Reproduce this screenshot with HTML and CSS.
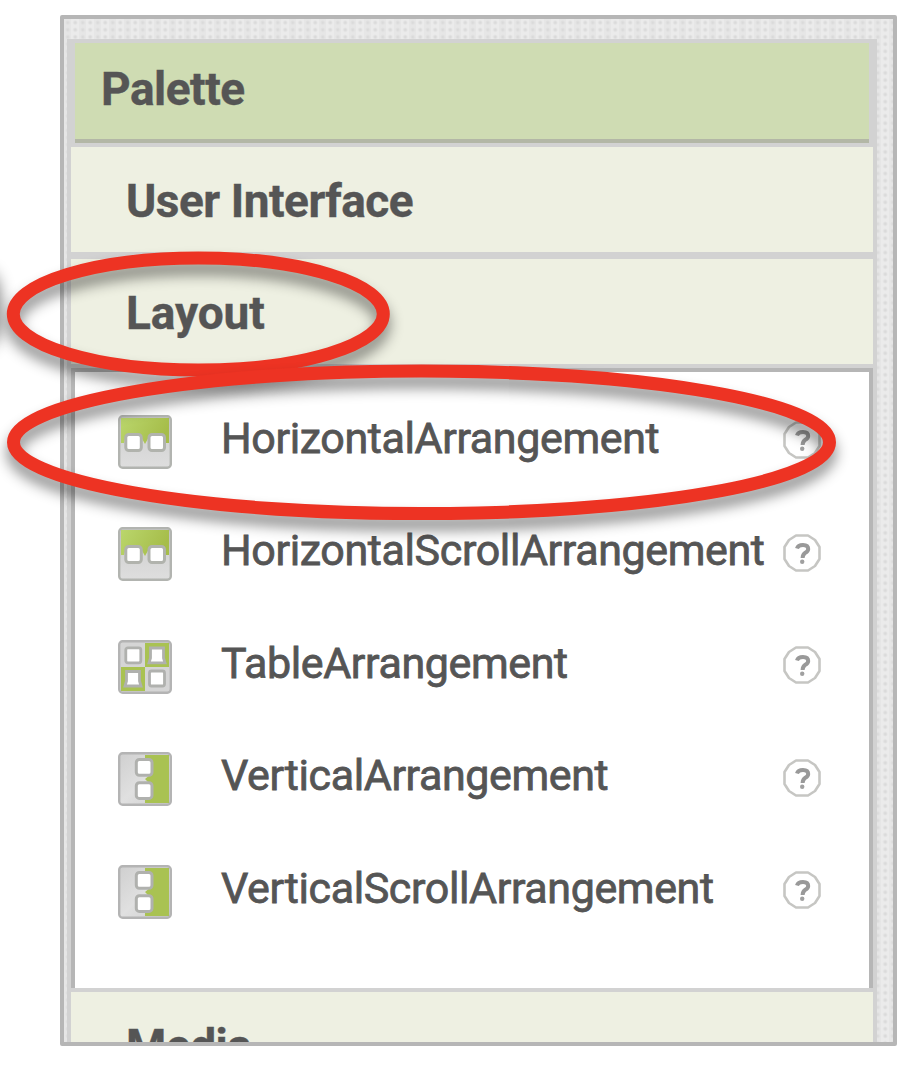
FILE: index.html
```html
<!DOCTYPE html>
<html lang="en">
<head>
<meta charset="utf-8">
<title>Palette</title>
<link rel="stylesheet" href="styles.css">
</head>
<body>
<svg class="defs" width="0" height="0" aria-hidden="true">
  <defs>
    <linearGradient id="leaf" x1="0" y1="0" x2="1" y2="0.3"><stop offset="0" stop-color="#bad66c"/><stop offset="1" stop-color="#a6bd4a"/></linearGradient>
    <linearGradient id="steel" x1="0" y1="0" x2="0" y2="1"><stop offset="0" stop-color="#cccccc"/><stop offset="1" stop-color="#dedede"/></linearGradient>
    <linearGradient id="side" x1="0" y1="0" x2="1" y2="1"><stop offset="0" stop-color="#cfcfcf"/><stop offset=".5" stop-color="#e0e0e0"/><stop offset="1" stop-color="#cecece"/></linearGradient>
    <symbol id="horizontal" viewBox="0 0 54 54">
      <rect x="1.2" y="1.2" width="51.6" height="51.6" rx="3.5" fill="url(#steel)"/>
      <path d="M3 3H51V28H48L46 20H32L27 29L22 20H8L6 28H3Z" fill="url(#leaf)"/>
      <rect x="1.2" y="1.2" width="51.6" height="51.6" rx="3.5" fill="none" stroke="#b2b4b0" stroke-width="2.4"/>
      <g fill="#fff" stroke="#b1b3ad" stroke-width="3"><rect x="7.8" y="19.5" width="15.5" height="16" rx="3"/><rect x="31" y="19.5" width="15.5" height="16" rx="3"/></g>
    </symbol>
    <symbol id="vertical" viewBox="0 0 54 54">
      <rect x="1.2" y="1.2" width="51.6" height="51.6" rx="3.5" fill="url(#side)"/>
      <path d="M27 3H51V51H27V46L33 38V33L27 27L33 22V13L27 8Z" fill="#a9c252"/>
      <rect x="1.2" y="1.2" width="51.6" height="51.6" rx="3.5" fill="none" stroke="#b4b4b4" stroke-width="2.4"/>
      <g fill="#fff" stroke="#b0b1ae" stroke-width="3"><rect x="18.3" y="7.5" width="15.7" height="15.7" rx="3"/><rect x="18.3" y="30.7" width="15.7" height="15.7" rx="3"/></g>
    </symbol>
    <symbol id="table" viewBox="0 0 54 54">
      <rect x="1.2" y="1.2" width="51.6" height="51.6" rx="3.5" fill="#d5d5d5"/>
      <path d="M27 3H51V27H27V51H3V27H27Z" fill="#a9c252"/>
      <rect x="1.2" y="1.2" width="51.6" height="51.6" rx="3.5" fill="none" stroke="#b4b4b4" stroke-width="2.4"/>
      <g fill="#fff" stroke="#b0b1ae" stroke-width="2.8"><rect x="7.8" y="7.8" width="15" height="15" rx="2"/><path d="M32.5 8H45.5V18L47 22.8H31L32.5 18Z"/><path d="M8.5 31.5H21.5V41L23 46H7L8.5 41Z"/><rect x="31.5" y="31" width="15" height="15" rx="2"/></g>
    </symbol>
    <symbol id="help" viewBox="0 0 38 38">
      <path d="M13 1.5H25L32 6L36.5 13V25L32 32L25 36.5H13L6 32L1.5 25V13L6 6Z" fill="#fff" stroke="#c6c6c3" stroke-width="2.6" stroke-linejoin="round"/>
      <path d="M14 14.5Q15 11 20 11Q25.2 11 25.2 15Q25.2 17.2 22.3 18.8Q19.8 20.3 19.6 24" fill="none" stroke="#999" stroke-width="4"/>
      <circle cx="19.2" cy="27.7" r="2.2" fill="#a0a0a0"/>
    </symbol>
  </defs>
</svg>
<main class="frame">
  <section class="panel">
    <h1 class="title">Palette</h1>
    <h2 class="category">User Interface</h2>
    <h2 class="category wide">Layout</h2>
    <ul class="items">
      <li class="item"><svg class="icon"><use href="#horizontal"/></svg><span class="label">HorizontalArrangement</span><svg class="help"><use href="#help"/></svg></li>
      <li class="item"><svg class="icon"><use href="#horizontal"/></svg><span class="label">HorizontalScrollArrangement</span><svg class="help"><use href="#help"/></svg></li>
      <li class="item"><svg class="icon"><use href="#table"/></svg><span class="label">TableArrangement</span><svg class="help"><use href="#help"/></svg></li>
      <li class="item"><svg class="icon"><use href="#vertical"/></svg><span class="label">VerticalArrangement</span><svg class="help"><use href="#help"/></svg></li>
      <li class="item"><svg class="icon"><use href="#vertical"/></svg><span class="label">VerticalScrollArrangement</span><svg class="help"><use href="#help"/></svg></li>
    </ul>
    <h2 class="category">Media</h2>
  </section>
</main>
<svg class="marks" viewBox="0 0 910 1068" aria-hidden="true">
  <ellipse class="edge" cx="-13" cy="309" rx="14" ry="38"/>
  <ellipse class="ring" cx="198.3" cy="314" rx="185" ry="56"/>
  <ellipse class="ring" cx="421.5" cy="442.3" rx="408" ry="71.3"/>
</svg>
</body>
</html>
```
FILE: styles.css
```css
* { box-sizing: border-box; }
body {
  margin: 0;
  width: 910px;
  height: 1068px;
  padding: 15px 0 0 60px;
  overflow: hidden;
  position: relative;
  background: #fff;
  color: #555;
  font-family: Roboto, sans-serif;
}
.defs { position: absolute; }
.frame {
  width: 837px;
  height: 1031px;
  border: 4px solid #b6b6b6;
  border-radius: 2px;
  padding: 20px 16px 0 3px;
  overflow: hidden;
  background-color: #ebebeb;
  background-image:
    radial-gradient(circle at 50% 50%, #d6d6d6 0, #dedede 1.3px, transparent 2.6px),
    linear-gradient(90deg, #e6e6e6 50%, #ebebeb 50%);
  background-size: 7.5px 7.2px, 15px 15px;
}
.panel {
  width: 810px;
  height: 1010px;
  padding: 4px 4px 0;
  background: #d2d2d2;
}
.title, .category {
  margin: 0;
  font-size: 46px;
  font-weight: 700;
  letter-spacing: -.48px;
  -webkit-text-stroke: .4px #555;
  display: flex;
  align-items: center;
}
.title {
  height: 100px;
  padding: 0 0 8px 26px;
  background: #cfdcb3;
  border: solid #d2d2d2;
  border-width: 0 4px;
  box-shadow: inset 0 -4px #b3b7a6;
}
.category {
  height: 105px;
  margin-top: 4px;
  padding: 3px 0 0 55px;
  background: #eef0e2;
}
.category + .category { margin-top: 7px; }
.wide { letter-spacing: -.1px; }
.items {
  margin: 4px 0 0;
  padding: 13.8px 48px 0 43px;
  height: 620px;
  list-style: none;
  background: #fff;
  border: solid #b6b6b6;
  border-width: 4px 4px 0;
}
.item { display: flex; align-items: center; height: 112.4px; font-size: 43px; }
.icon { width: 54px; height: 54px; flex: none; }
.label {
  flex: 1;
  padding-left: 49px;
  margin-top: -8px;
  white-space: nowrap;
  letter-spacing: -.38px;
  -webkit-text-stroke: .8px #555;
}
.help { width: 38px; height: 38px; flex: none; margin-top: -3px; }
.marks { position: absolute; left: 0; top: 0; width: 910px; height: 1068px; overflow: hidden; }
.ring { fill: none; stroke: #ed3323; stroke-width: 13; filter: drop-shadow(0 10px 7px rgba(0, 0, 0, .46)); }
.edge { fill: #000; opacity: .5; filter: blur(8px); }
```
